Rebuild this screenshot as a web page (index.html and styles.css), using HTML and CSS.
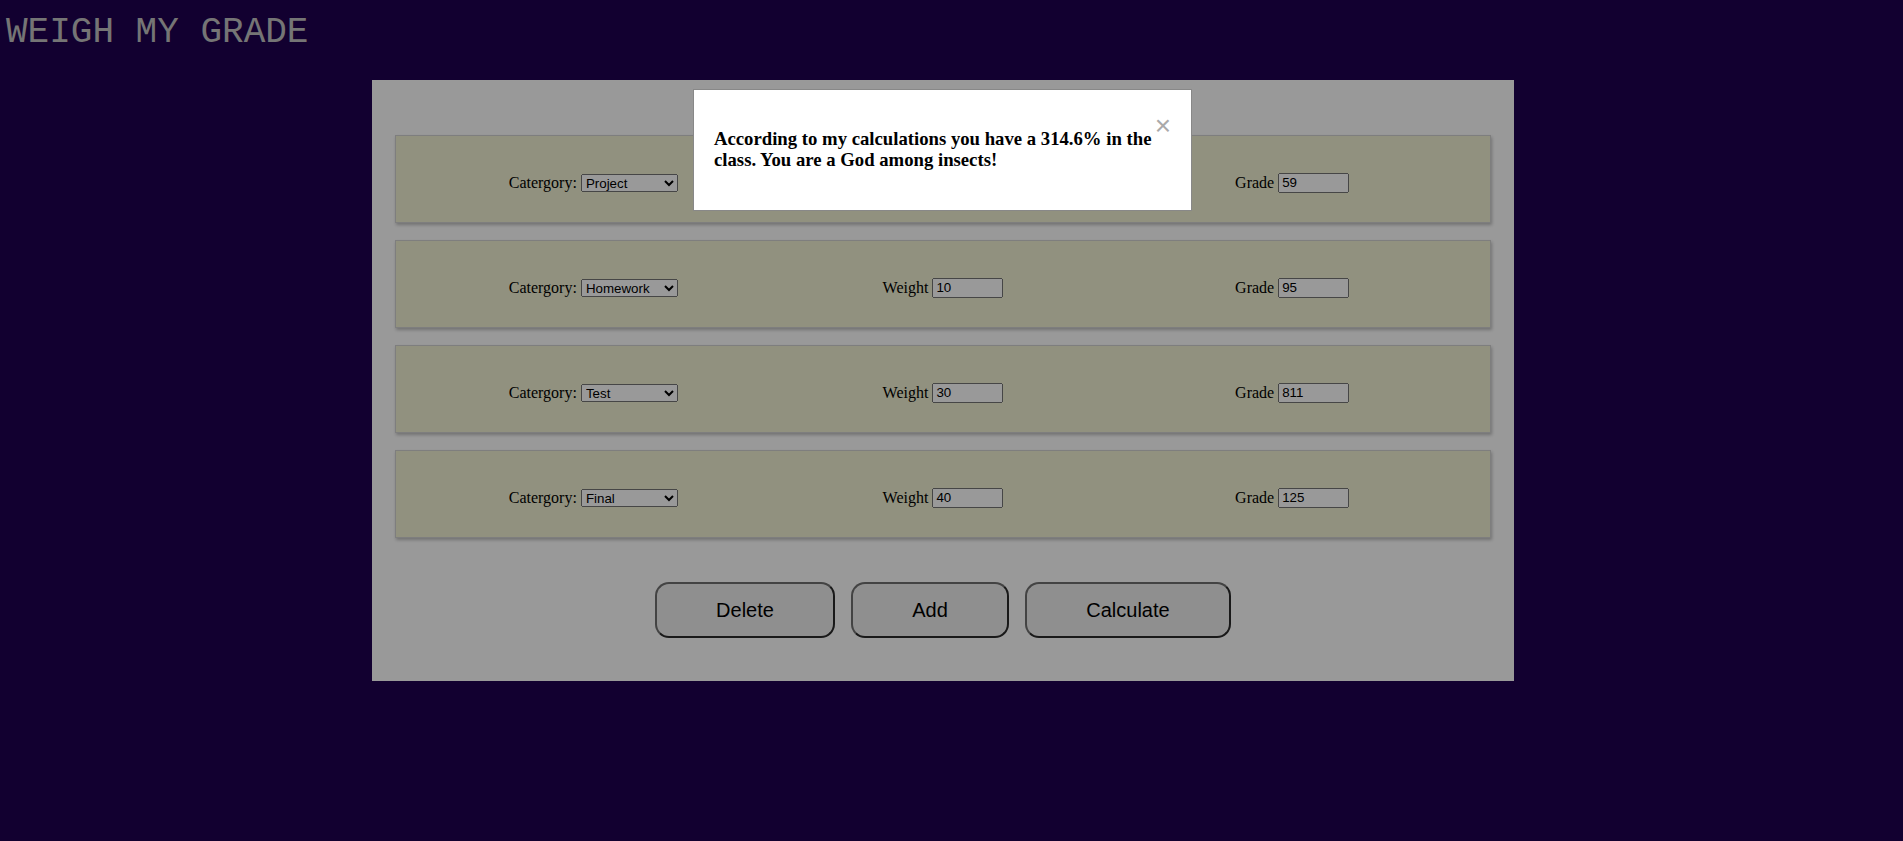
FILE: index.html
```html
<!DOCTYPE html>
<html lang="en">
<head>
<meta charset="utf-8">
<title>Weigh My Grade</title>
<link rel="stylesheet" href="styles.css">
</head>
<body>
<h1 class="title">WEIGH MY GRADE</h1>
<main class="card">
  <div class="rows">
    <div class="row">
      <div class="cell cell-left">Catergory: <select class="sel"><option selected>Project</option><option>Homework</option><option>Test</option><option>Final</option></select></div>
      <div class="cell">Weight <input class="num" type="text" value=""></div>
      <div class="cell cell-right">Grade <input class="num" type="text" value="59"></div>
    </div>
    <div class="row">
      <div class="cell cell-left">Catergory: <select class="sel"><option>Project</option><option selected>Homework</option><option>Test</option><option>Final</option></select></div>
      <div class="cell">Weight <input class="num" type="text" value="10"></div>
      <div class="cell cell-right">Grade <input class="num" type="text" value="95"></div>
    </div>
    <div class="row">
      <div class="cell cell-left">Catergory: <select class="sel"><option>Project</option><option>Homework</option><option selected>Test</option><option>Final</option></select></div>
      <div class="cell">Weight <input class="num" type="text" value="30"></div>
      <div class="cell cell-right">Grade <input class="num" type="text" value="811"></div>
    </div>
    <div class="row">
      <div class="cell cell-left">Catergory: <select class="sel"><option>Project</option><option>Homework</option><option>Test</option><option selected>Final</option></select></div>
      <div class="cell">Weight <input class="num" type="text" value="40"></div>
      <div class="cell cell-right">Grade <input class="num" type="text" value="125"></div>
    </div>
  </div>
  <div class="actions">
    <button class="btn btn-delete">Delete</button>
    <button class="btn btn-add">Add</button>
    <button class="btn btn-calc">Calculate</button>
  </div>
</main>
<div class="modal">
  <div class="modal-content">
    <span class="close">&times;</span>
    <h3 class="msg">According to my calculations you have a 314.6% in the class. You are a God among insects!</h3>
  </div>
</div>
</body>
</html>
```

FILE: styles.css
```css
html {
  background: #1e0050;
}
body {
  margin: 0;
  min-height: 841px;
  background: #1e0050;
  font-family: "Liberation Serif", "Times New Roman", serif;
  font-size: 16px;
  color: #000;
}
.title {
  margin: 12px 0 0 0;
  padding-left: 6px;
  height: 68px;
  font-family: "Liberation Mono", "Courier New", monospace;
  font-weight: normal;
  font-size: 36px;
  line-height: 41px;
  color: #c4c4c4;
}
.card {
  box-sizing: border-box;
  margin-left: 372px;
  width: 1142px;
  height: 601px;
  background: #ffffff;
  padding: 55px 23px 0 23px;
}
.rows {
  display: flex;
  flex-direction: column;
  gap: 17px;
}
.row {
  box-sizing: border-box;
  height: 88px;
  background: #f2f2d4;
  border: 1px solid #d2d2d2;
  box-shadow: 1px 2px 3px rgba(0, 0, 0, 0.25);
  display: grid;
  grid-template-columns: 1fr 1fr 1fr;
  align-items: center;
  padding-top: 7px;
}
.cell {
  text-align: center;
  white-space: nowrap;
}
.cell-left {
  padding-left: 30px;
}
.cell-right {
  padding-right: 31px;
}
.sel {
  width: 97px;
  height: 18px;
  font-family: "Liberation Sans", Arial, sans-serif;
  font-size: 13.33px;
  vertical-align: baseline;
}
.num {
  box-sizing: border-box;
  width: 71px;
  height: 20px;
  padding: 1px 2px;
  font-family: "Liberation Sans", Arial, sans-serif;
  font-size: 13.33px;
}
.actions {
  display: flex;
  justify-content: center;
  gap: 16px;
  margin-top: 44px;
}
.btn {
  box-sizing: border-box;
  height: 56px;
  padding: 0;
  background: #efefef;
  border-width: 2px;
  border-style: solid;
  border-color: #707070 #2a2a2a #2a2a2a #707070;
  border-radius: 14px;
  font-family: "Liberation Sans", Arial, sans-serif;
  font-size: 20px;
  color: #000;
}
.btn-delete { width: 180px; }
.btn-add { width: 158px; }
.btn-calc { width: 206px; }
.modal {
  position: fixed;
  top: 0;
  left: 0;
  right: 0;
  bottom: 0;
  background: rgba(0, 0, 0, 0.4);
  z-index: 10;
}
.modal-content {
  width: 457px;
  margin: 89px 0 0 693px;
  padding: 19px 20px 20px 20px;
  background: #ffffff;
  border: 1px solid #888888;
}
.close {
  float: right;
  margin-top: 1px;
  color: #aaaaaa;
  font-family: "Liberation Sans", Arial, sans-serif;
  font-size: 28px;
  line-height: normal;
}
.msg {
  margin: 18.72px 0 19.72px 0;
  font-size: 18.72px;
  font-weight: bold;
  line-height: 21.5px;
}
```
